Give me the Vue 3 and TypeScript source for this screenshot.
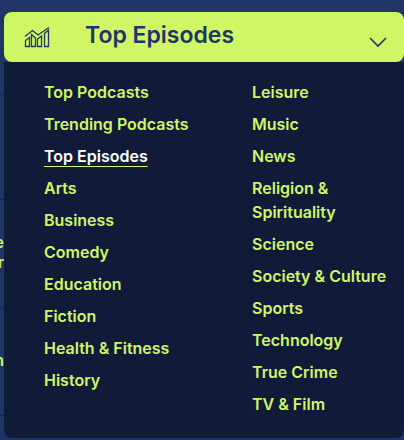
<script setup lang="ts">
import { ref } from 'vue'

interface Category {
  label: string
  slug: string
}

const toCategory = (label: string): Category => ({
  label,
  slug: label.toLowerCase().replace(/[^a-z]+/g, '-'),
})

const columns: Category[][] = [
  [
    'Top Podcasts',
    'Trending Podcasts',
    'Top Episodes',
    'Arts',
    'Business',
    'Comedy',
    'Education',
    'Fiction',
    'Health & Fitness',
    'History',
  ].map(toCategory),
  [
    'Leisure',
    'Music',
    'News',
    'Religion & Spirituality',
    'Science',
    'Society & Culture',
    'Sports',
    'Technology',
    'True Crime',
    'TV & Film',
  ].map(toCategory),
]

// Rows of the chart that lies behind the open menu
const chartRows: string[][] = [[], [], ['e', 'r'], ['n'], []]

const current = ref('Top Episodes')
const open = ref(true)
</script>

<template>
  <div class="page">
    <div class="chart" aria-hidden="true">
      <div v-for="(row, i) in chartRows" :key="i" class="chart-row">
        <span v-for="line in row" :key="line">{{ line }}</span>
      </div>
    </div>

    <div class="dropdown">
      <button class="toggle" type="button" :aria-expanded="open" @click="open = !open">
        <svg class="chart-icon" viewBox="0 0 26 22" aria-hidden="true">
          <path d="M1.5 20.5V14.500l4-3v9zM7.500 20.500V8.500l4 3.500v8.500zM13.500 20.500v-7.500l4-3v10.500zM20.500 20.500V7.500l4-3.500v16.500z" />
          <path d="M1 10.500L8.500 4.500l5.500 4.500L25 1.500" />
        </svg>
        <span class="title">{{ current }}</span>
        <svg class="chevron" viewBox="0 0 18 11" aria-hidden="true">
          <path d="M1 1l8 8 8-8" />
        </svg>
      </button>

      <nav v-if="open" class="menu" aria-label="Categories">
        <ul v-for="(column, i) in columns" :key="i">
          <li v-for="item in column" :key="item.slug">
            <a
              :href="'#' + item.slug"
              :class="{ active: item.label === current }"
              @click="current = item.label"
            >{{ item.label }}</a>
          </li>
        </ul>
      </nav>
    </div>
  </div>
</template>

<style>
body {
  background: #203466;
}
</style>

<style scoped>
.page {
  position: relative;
  min-height: 100vh;
  padding: 12px 0 2px 4px;
  box-sizing: border-box;
  overflow: hidden;
  font-family: Inter, "Liberation Sans", sans-serif;
  font-weight: 600;
}

.chart {
  position: absolute;
  inset: 0 0 auto 0;
}

.chart-row {
  display: flex;
  flex-direction: column;
  justify-content: center;
  align-items: flex-end;
  box-sizing: border-box;
  height: 108px;
  padding: 0 calc(100% - 4px) 4px 0;
  border-bottom: 1px solid #17274f;
  color: #cef564;
  font-size: 16px;
  line-height: 20px;
}

.chart-row:first-child {
  height: 95px;
}

.chart-row:nth-child(2) {
  height: 105px;
}

.dropdown {
  position: relative;
}

.toggle {
  display: flex;
  align-items: center;
  width: 100%;
  height: 50px;
  padding: 0 17px 0 20px;
  border: 0;
  border-radius: 8px;
  background: #cff765;
  color: #203466;
  font: inherit;
  font-size: 23px;
  line-height: 30px;
  text-align: left;
  cursor: pointer;
}

.toggle svg {
  flex: none;
  fill: none;
  stroke: currentColor;
}

.chart-icon {
  width: 26px;
  height: 22px;
  stroke-width: 1.3;
}

.title {
  flex: 1;
  padding: 0 0 4px 35px;
}

.chevron {
  width: 18px;
  height: 11px;
  margin-top: 10px;
  stroke-width: 1.6;
}

.menu {
  display: grid;
  grid-template-columns: 1fr 1fr;
  gap: 60px;
  padding: 18px 4px 22px 40px;
  border-radius: 0 0 8px 8px;
  background: #0f1b38;
  font-size: 16px;
  line-height: 24px;
}

.menu ul {
  display: flex;
  flex-direction: column;
  gap: 8px;
  margin: 0;
  padding: 0;
  list-style: none;
}

.menu a {
  display: block;
  width: fit-content;
  color: #cff765;
  text-decoration: none;
}

.menu a.active {
  color: #fff;
  text-decoration: underline 1px #cff765;
  text-decoration-skip-ink: none;
  text-underline-offset: 4px;
}
</style>
